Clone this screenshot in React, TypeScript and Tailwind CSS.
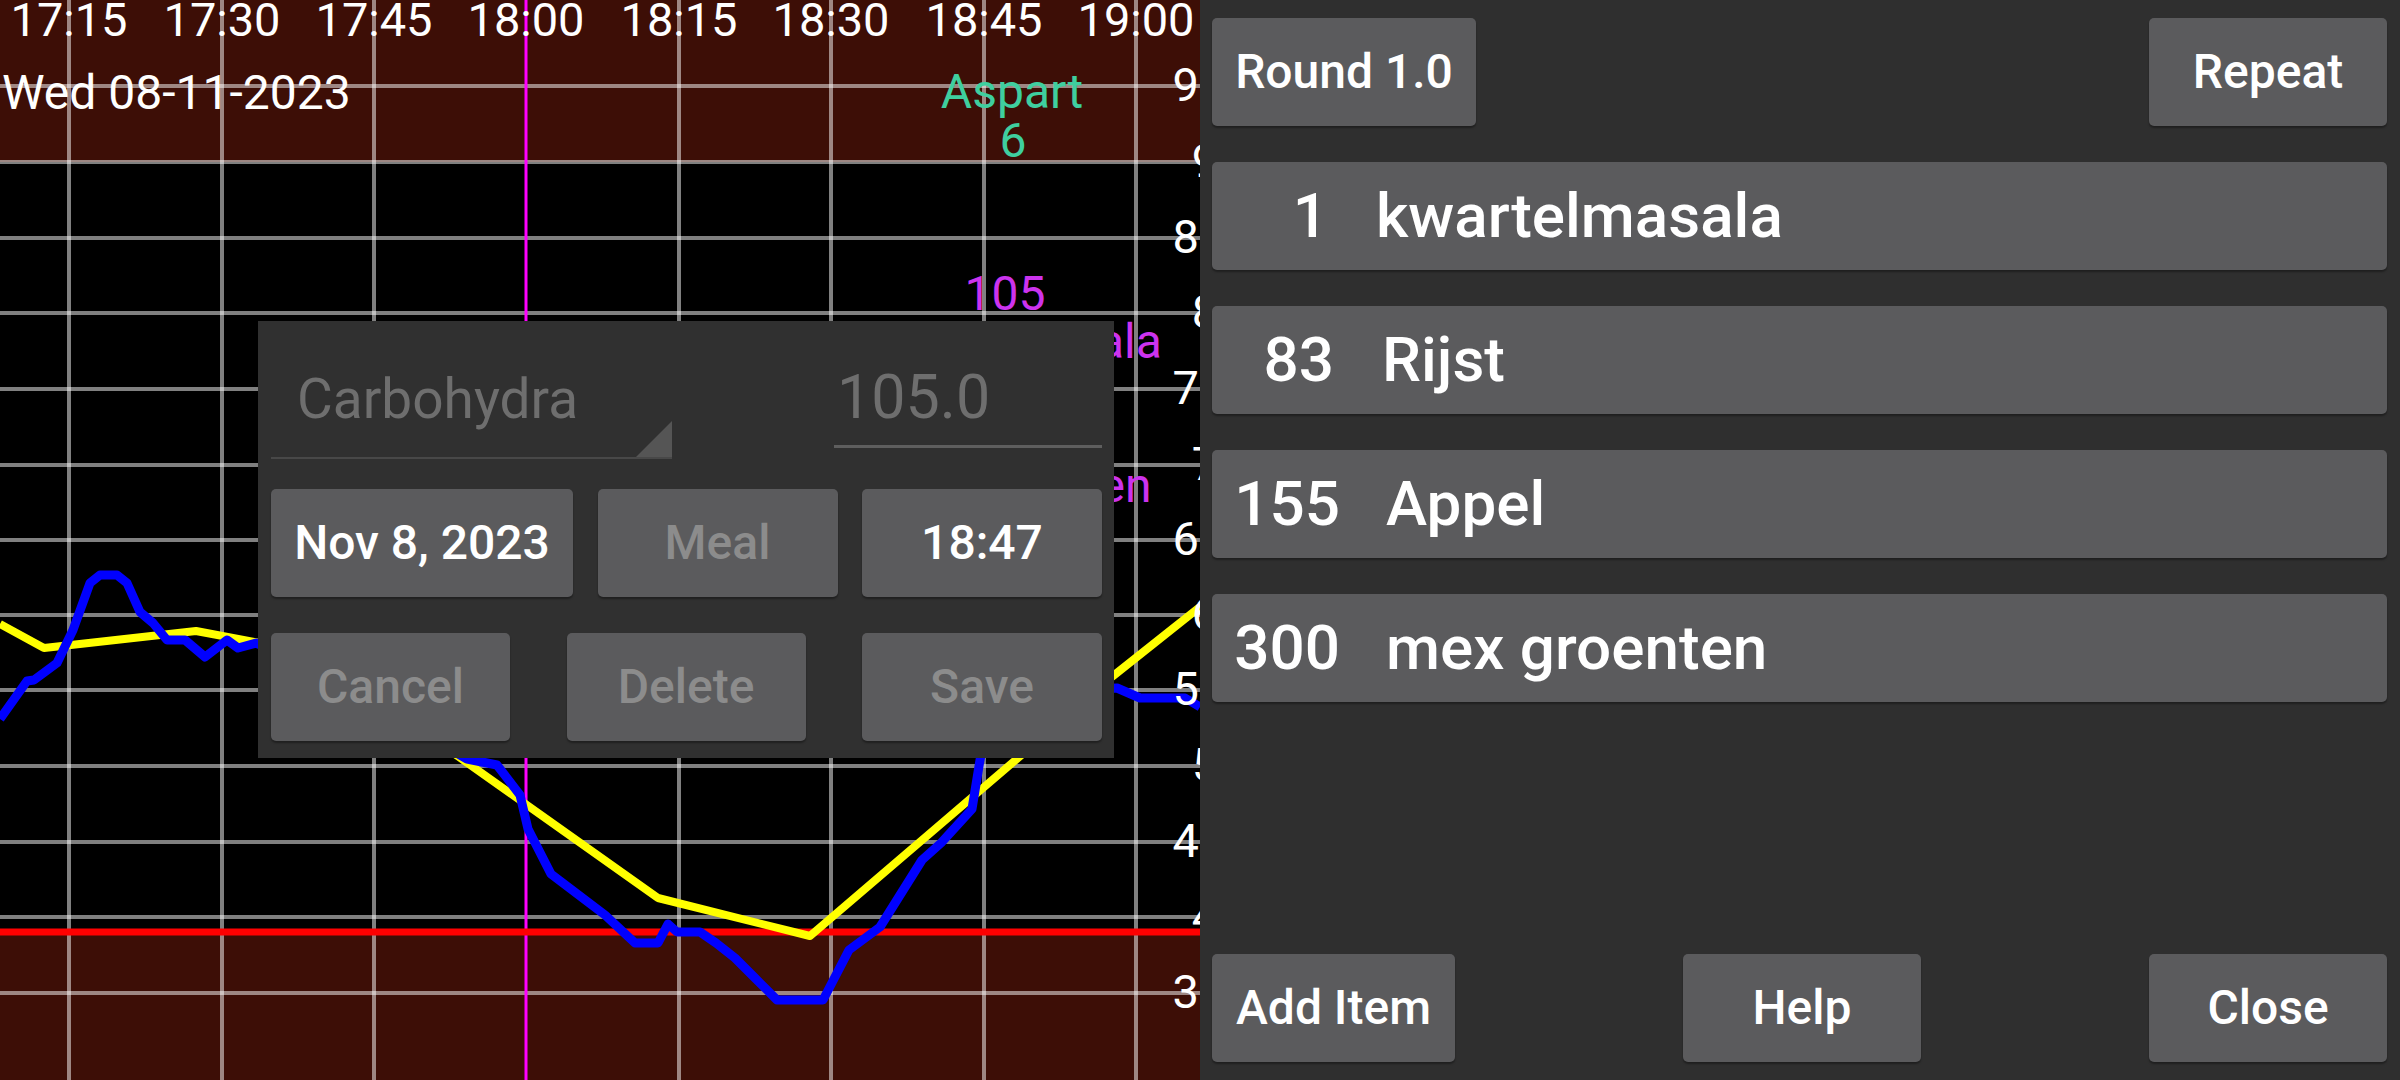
import clsx from "clsx";

const gridX = [69, 222, 374, 679, 831, 984, 1136];
const times = ["17:15", "17:30", "17:45", "18:00", "18:15", "18:30", "18:45", "19:00"];
const timeX = [69, 222, 374, 526, 679, 831, 984, 1136];
const gridY = [86, 162, 238, 313, 389, 465, 540, 615, 690, 766, 842, 917, 993];
const yLabels = ["9.5", "9", "8.5", "8", "7.5", "7", "6.5", "6", "5.5", "5", "4.5", "4", "3.5"];

const yellow =
  "0,624 44,648 196,631 260,643 300,650 459,757 658,898 810,936 1018,758 1113,676 1200,607";
const blue =
  "0,719 27,681 34,680 57,663 73,630 90,583 100,575 117,575 127,583 140,612 153,623 167,640 185,640 205,657 227,640 238,648 256,643 300,662 400,720 467,759 497,765 520,795 528,829 551,874 605,915 635,943 658,943 668,924 677,932 700,932 716,943 735,958 754,977 777,1000 823,1000 849,950 880,927 922,860 941,843 972,809 980,760 990,712 1010,692 1117,688 1140,698 1185,698 1200,707";

function Chart() {
  return (
    <svg width="1200" height="1080" className="block" fontFamily="Roboto, sans-serif">
      <rect x="0" y="0" width="1200" height="1080" fill="#3d0e06" />
      <rect x="0" y="162" width="1200" height="770" fill="#000000" />
      {gridX.map((x) => (
        <line key={x} x1={x} y1="0" x2={x} y2="1080" stroke="rgba(255,255,255,0.5)" strokeWidth="4" />
      ))}
      {gridY.map((y) => (
        <line key={y} x1="0" y1={y} x2="1200" y2={y} stroke="rgba(255,255,255,0.5)" strokeWidth="4" />
      ))}
      <line x1="526" y1="0" x2="526" y2="1080" stroke="#ff00ff" strokeWidth="3" />
      <line x1="0" y1="932" x2="1200" y2="932" stroke="#ff0000" strokeWidth="7" />
      <polyline points={yellow} fill="none" stroke="#ffff00" strokeWidth="8" strokeLinejoin="round" />
      <polyline points={blue} fill="none" stroke="#0000ff" strokeWidth="9" strokeLinejoin="round" />

      {times.map((t, i) => (
        <text key={t} x={timeX[i]} y="36" fill="#ffffff" fontSize="47" textAnchor="middle">
          {t}
        </text>
      ))}
      <text x="2" y="109" fill="#ffffff" fontSize="48">
        Wed 08-11-2023
      </text>

      <g fill="#3fcf9f" fontSize="48" textAnchor="middle">
        <text x="1012" y="108">Aspart</text>
        <text x="1013" y="157">6</text>
      </g>
      {/* meal labels; the ones in the middle sit behind the dialog */}
      <g fill="#cc33ee" fontSize="48" textAnchor="middle">
        <text x="1005" y="310">105</text>
        <text x="1005" y="358">kwartelmasala</text>
        <text x="1005" y="502">mex groenten</text>
      </g>

      {yLabels.map((l, i) => (
        <text key={l} x="1205" y={gridY[i] + 15} fill="#ffffff" fontSize="47" textAnchor="middle">
          {l}
        </text>
      ))}
    </svg>
  );
}

function Btn({
  children,
  dim,
  className,
}: {
  children: React.ReactNode;
  dim?: boolean;
  className?: string;
}) {
  return (
    <div
      className={clsx(
        "h-[108px] min-w-[238px] px-[24px] rounded-[5px] bg-[#5b5b5d] shadow-[0_2px_2px_rgba(0,0,0,0.35)] flex items-center justify-center text-[48px] font-medium leading-none whitespace-nowrap",
        dim ? "text-[#8c8c8c]" : "text-white",
        className
      )}
    >
      {children}
    </div>
  );
}

function Dialog() {
  return (
    <div className="absolute left-[258px] top-[321px] w-[856px] h-[437px] bg-[#303030] pl-[13px] pr-[12px] flex flex-col">
      <div className="h-[168px] flex items-start justify-between">
        <div className="relative w-[401px] pt-[51px] pb-[30px] border-b-2 border-[#484848]">
          <div className="pl-[26px] text-[55px] leading-none text-[#6e6e6e]">Carbohydra</div>
          <svg className="absolute right-0 bottom-0" width="36" height="36" viewBox="0 0 36 36">
            <polygon points="0,36 36,36 36,0" fill="#555555" />
          </svg>
        </div>
        <div className="w-[268px] pt-[46px] pb-[17px] border-b-[3px] border-[#5e5e5e]">
          <div className="pl-[3px] text-[61px] leading-none text-[#6e6e6e]">105.0</div>
        </div>
      </div>
      <div className="flex justify-between">
        <Btn className="w-[302px]">Nov 8, 2023</Btn>
        <Btn dim className="w-[240px]">Meal</Btn>
        <Btn className="w-[240px]">18:47</Btn>
      </div>
      <div className="mt-[36px] flex justify-between">
        <Btn dim className="w-[239px]">Cancel</Btn>
        <Btn dim className="w-[239px]">Delete</Btn>
        <Btn dim className="w-[240px]">Save</Btn>
      </div>
    </div>
  );
}

const items = [
  { n: "1", name: "kwartelmasala", gap: "ml-[48px]", w: "w-[116px]" },
  { n: "83", name: "Rijst", gap: "ml-[48px]", w: "w-[122px]" },
  { n: "155", name: "Appel", gap: "ml-[46px]", w: "w-[128px]" },
  { n: "300", name: "mex groenten", gap: "ml-[46px]", w: "w-[128px]" },
];

export default function App() {
  return (
    <div className="w-[2400px] h-[1080px] flex font-[Roboto,sans-serif] overflow-hidden">
      <div className="relative w-[1200px] h-[1080px] overflow-hidden shrink-0">
        <Chart />
        <Dialog />
      </div>

      <div className="w-[1200px] h-[1080px] bg-[#2f2f2f] pt-[18px] pb-[18px] pl-[12px] pr-[13px] flex flex-col">
        <div className="flex justify-between">
          <Btn className="w-[264px]">Round 1.0</Btn>
          <Btn>Repeat</Btn>
        </div>

        <div className="mt-[36px] flex flex-col gap-[36px]">
          {items.map((it) => (
            <div
              key={it.name}
              className="h-[108px] rounded-[5px] bg-[#5b5b5d] shadow-[0_2px_2px_rgba(0,0,0,0.35)] flex items-center text-[62px] font-medium leading-none text-white"
            >
              <span className={clsx("text-right", it.w)}>{it.n}</span>
              <span className={it.gap}>{it.name}</span>
            </div>
          ))}
        </div>

        <div className="mt-auto flex justify-between">
          <Btn>Add Item</Btn>
          <Btn>Help</Btn>
          <Btn>Close</Btn>
        </div>
      </div>
    </div>
  );
}
